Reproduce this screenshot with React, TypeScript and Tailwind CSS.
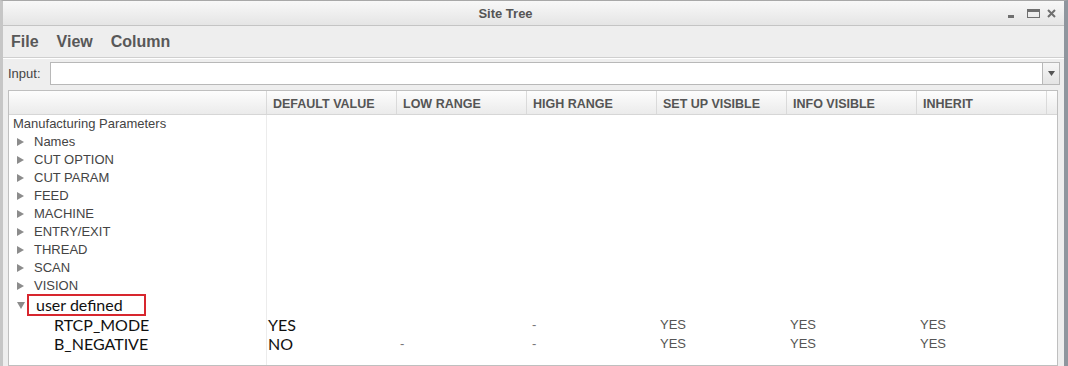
import React from 'react'

const treeItems = ['Names', 'CUT OPTION', 'CUT PARAM', 'FEED', 'MACHINE', 'ENTRY/EXIT', 'THREAD', 'SCAN', 'VISION']

const headers = ['DEFAULT VALUE', 'LOW RANGE', 'HIGH RANGE', 'SET UP VISIBLE', 'INFO VISIBLE', 'INHERIT']

const params = [
  { name: 'RTCP_MODE', def: 'YES', low: '', high: '-', h: 'h-[19px]' },
  { name: 'B_NEGATIVE', def: 'NO', low: '-', high: '-', h: 'h-[20px]' },
]

function RightArrow() {
  return (
    <svg width="7" height="8" viewBox="0 0 7 8" className="shrink-0">
      <polygon points="0,0 7,4 0,8" fill="#8c8c8c" />
    </svg>
  )
}

function DownArrow() {
  return (
    <svg width="8" height="7" viewBox="0 0 8 7" className="shrink-0">
      <polygon points="0,0 8,0 4,7" fill="#8c8c8c" />
    </svg>
  )
}

export default function App() {
  return (
    <div className="w-[1068px] h-[366px] overflow-hidden flex flex-col bg-[#eeeeee] border-t border-t-[#a8a8a8] border-l-[3px] border-l-[#c6c6c6] border-r-[4px] border-r-[#8f969e] font-['Liberation_Sans',Arial,sans-serif]">
      {/* title bar */}
      <div className="h-[25px] shrink-0 flex items-center bg-gradient-to-b from-[#f8f8f8] to-[#e5e5e5] border-b border-[#c4c4c4]">
        <div className="flex-1 text-center text-[13px] font-bold text-[#555] pt-[2px]">Site Tree</div>
        <div className="w-[56px] flex items-center text-[#666]">
          <div className="w-[6px] h-[3px] bg-[#6f6f6f] mt-[6px]" />
          <div className="ml-[13px] w-[13px] h-[9px] border border-[#6f6f6f] border-t-[3px]" />
          <svg width="9" height="9" viewBox="0 0 9 9" className="ml-[7px]">
            <path d="M1 1 L8 8 M8 1 L1 8" stroke="#6f6f6f" strokeWidth="2" />
          </svg>
        </div>
      </div>

      {/* menu */}
      <div className="h-[32px] shrink-0 flex items-center gap-[18px] pl-[8px] text-[16px] font-bold text-[#585858] border-b border-[#cfcfcf]">
        <span>File</span>
        <span>View</span>
        <span>Column</span>
      </div>

      {/* input row */}
      <div className="shrink-0 flex items-center pt-[3px] pl-[5px] pr-[4px] h-[27px] border-t border-white">
        <span className="text-[13px] text-[#444] w-[42px]">Input:</span>
        <div className="flex-1 h-[23px] bg-white border border-[#b8b8b8]" />
        <div className="w-[17px] h-[23px] border border-l-0 border-[#b8b8b8] bg-gradient-to-b from-[#f6f6f6] to-[#e4e4e4] flex items-center justify-center">
          <svg width="7" height="5" viewBox="0 0 7 5">
            <polygon points="0,0 7,0 3.5,5" fill="#555" />
          </svg>
        </div>
      </div>

      {/* table */}
      <div className="flex-1 mt-[5px] ml-[5px] mr-[6px] border border-[#bfbfbf] bg-white flex flex-col">
        <div className="h-[24px] shrink-0 flex bg-gradient-to-b from-[#fdfdfd] to-[#ebebeb] border-b border-[#d6d6d6]">
          <div className="w-[258px] border-r border-[#dadada]" />
          {headers.map((h) => (
            <div key={h} className="w-[130px] border-r border-[#dadada] pl-[6px] pt-[3px] flex items-center text-[12.5px] font-bold text-[#555]">
              {h}
            </div>
          ))}
          <div className="flex-1" />
        </div>

        <div className="flex-1 flex">
          {/* tree column */}
          <div className="w-[258px] border-r border-[#ececec] text-[13px] text-[#444]">
            <div className="h-[18px] pl-[4px] flex items-center">Manufacturing Parameters</div>
            {treeItems.map((t) => (
              <div key={t} className="h-[18px] pl-[8px] flex items-center gap-[10px]">
                <RightArrow />
                <span>{t}</span>
              </div>
            ))}
            <div className="h-[20px] pl-[8px] flex items-center">
              <DownArrow />
              <span className="ml-[2px] w-[119px] h-[22px] shrink-0 border-2 border-[#d7262e] pl-[7px] flex items-center font-['Lato',sans-serif] text-[16px] text-[#111]">
                user defined
              </span>
            </div>
            {params.map((p) => (
              <div key={p.name} className={`${p.h} pl-[45px] flex items-center font-['Lato',sans-serif] text-[16px] text-[#111]`}>
                {p.name}
              </div>
            ))}
          </div>

          {/* data columns */}
          <div className="flex-1 flex flex-col">
            <div className="h-[200px]" />
            {params.map((p) => (
              <div key={p.name} className={`${p.h} flex items-center`}>
                <div className="w-[129px] pl-[1px] font-['Lato',sans-serif] text-[16px] text-[#111]">{p.def}</div>
                <div className="w-[130px] pl-[4px] text-[13px] text-[#777]">{p.low}</div>
                <div className="w-[130px] pl-[6px] text-[13px] text-[#777]">{p.high}</div>
                <div className="w-[130px] pl-[4px] text-[13px] text-[#555]">YES</div>
                <div className="w-[130px] pl-[4px] text-[13px] text-[#555]">YES</div>
                <div className="w-[130px] pl-[4px] text-[13px] text-[#555]">YES</div>
              </div>
            ))}
          </div>
        </div>
      </div>
    </div>
  )
}
